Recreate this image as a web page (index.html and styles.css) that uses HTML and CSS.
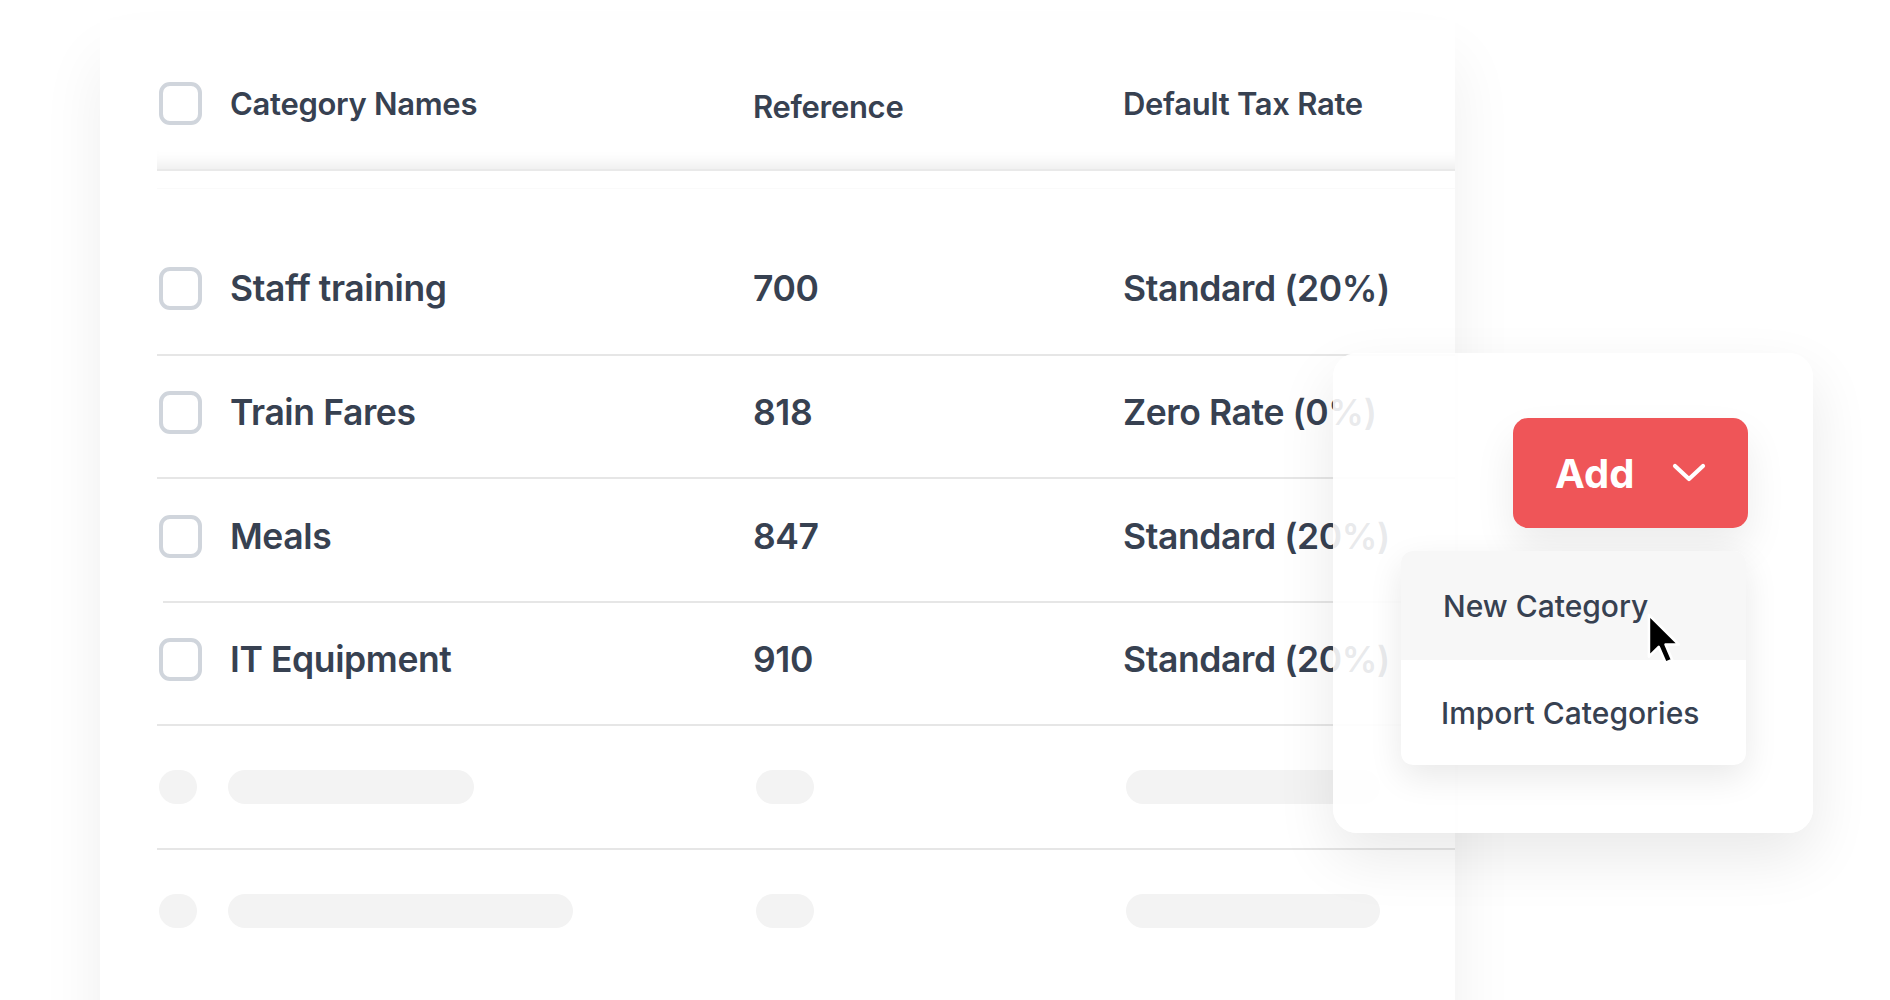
FILE: index.html
```html
<!DOCTYPE html>
<html>
<head>
<meta charset="utf-8">
<link rel="stylesheet" href="styles.css">
</head>
<body>
<div class="page">
  <div class="card">
    <div class="thead grid">
      <div class="cell name"><span class="cb"></span><span>Category Names</span></div>
      <div class="cell ref">Reference</div>
      <div class="cell tax">Default Tax Rate</div>
    </div>
    <div class="spacer"></div>
    <div class="row grid">
      <div class="cell name"><span class="cb"></span><span>Staff training</span></div>
      <div class="cell">700</div>
      <div class="cell">Standard (20%)</div>
    </div>
    <div class="row grid">
      <div class="cell name"><span class="cb"></span><span>Train Fares</span></div>
      <div class="cell">818</div>
      <div class="cell">Zero Rate (0%)</div>
    </div>
    <div class="row grid inset">
      <div class="cell name"><span class="cb"></span><span>Meals</span></div>
      <div class="cell">847</div>
      <div class="cell">Standard (20%)</div>
    </div>
    <div class="row grid">
      <div class="cell name"><span class="cb"></span><span>IT Equipment</span></div>
      <div class="cell">910</div>
      <div class="cell">Standard (20%)</div>
    </div>
    <div class="row grid skel">
      <div class="cell name"><span class="dot"></span><span class="bar bar-a"></span></div>
      <div class="cell"><span class="bar bar-ref"></span></div>
      <div class="cell"><span class="bar bar-tax"></span></div>
    </div>
    <div class="row grid skel last">
      <div class="cell name"><span class="dot"></span><span class="bar bar-b"></span></div>
      <div class="cell"><span class="bar bar-ref"></span></div>
      <div class="cell"><span class="bar bar-tax"></span></div>
    </div>
  </div>

  <div class="panel">
    <button class="add-btn"><span>Add</span>
      <svg class="chev" width="34" height="20" viewBox="0 0 34 20"><path d="M3 3 L17 16 L31 3" fill="none" stroke="#fff" stroke-width="4.2" stroke-linecap="round" stroke-linejoin="round"/></svg>
    </button>
    <div class="menu">
      <div class="item hover">New Category</div>
      <div class="item">Import Categories</div>
    </div>
  </div>

  <svg class="cursor" width="36" height="54" viewBox="0 0 19 28.5"><path d="M1 1 L1 23 L6.2 17.9 L9.8 26.3 L13.3 24.8 L9.8 16.6 L16.8 16.6 Z" fill="#000" stroke="#fff" stroke-width="1.4" stroke-linejoin="round"/></svg>
</div>
</body>
</html>
```
FILE: styles.css
```css
html, body {
  margin: 0;
  padding: 0;
  background: #ffffff;
}
.page {
  position: relative;
  width: 1890px;
  height: 1000px;
  overflow: hidden;
  font-family: Inter, "Noto Sans", "Liberation Sans", sans-serif;
  color: #374151;
}
.card {
  margin-left: 100px;
  margin-top: 20px;
  padding-top: 30px;
  width: 1355px;
  height: 1100px;
  padding-left: 57px;
  box-sizing: border-box;
  background: #ffffff;
  box-shadow: 0 40px 60px rgba(0, 0, 0, 0.065);
}
.grid {
  display: grid;
  grid-template-columns: 596px 370px 1fr;
  align-items: center;
}
.cell {
  display: flex;
  align-items: center;
  white-space: nowrap;
}
.name {
  padding-left: 2px;
  gap: 28px;
}
.cb {
  width: 43px;
  height: 43px;
  box-sizing: border-box;
  border: 4px solid #d0d5dc;
  border-radius: 11px;
  flex: none;
}
.thead {
  padding-top: 32px;
  padding-bottom: 44px;
  font-size: 31px;
  font-weight: 600;
  letter-spacing: -0.3px;
  border-bottom: 2px solid #e9e9e9;
  box-shadow: inset 0 -18px 14px -12px rgba(0, 0, 0, 0.07);
}
.thead .ref {
  padding-top: 6px;
}
.spacer {
  margin-top: 17px;
  height: 43px;
  border-top: 1px solid #fafafa;
}
.row {
  padding-bottom: 8px;
  box-sizing: border-box;
  border-bottom: 2px solid #e6e6e6;
  font-size: 35.5px;
  font-weight: 600;
  letter-spacing: -0.4px;
  height: 123.5px;
}
.row.skel {
  padding-bottom: 0;
}
.row.inset {
  border-bottom: none;
  background: linear-gradient(#e6e6e6, #e6e6e6) no-repeat 6px 100% / calc(100% - 6px) 2px;
}
.row.last {
  border-bottom: none;
}
.dot {
  width: 38px;
  height: 34px;
  border-radius: 17px;
  background: #f3f3f3;
  flex: none;
}
.bar {
  display: block;
  height: 34px;
  border-radius: 17px;
  background: #f3f3f3;
}
.name .bar {
  margin-left: 3px;
}
.bar-a { width: 246px; }
.bar-b { width: 345px; }
.bar-ref { width: 58px; margin-left: 3px; }
.bar-tax { width: 254px; margin-left: 3px; }

.panel {
  position: absolute;
  left: 1333px;
  top: 353px;
  width: 480px;
  height: 480px;
  box-sizing: border-box;
  padding: 65px 65px 0 68px;
  display: flex;
  flex-direction: column;
  border-radius: 24px;
  background: rgba(255, 255, 255, 0.89);
  box-shadow: 0 24px 60px rgba(0, 0, 0, 0.09);
}
.add-btn {
  align-self: flex-end;
  width: 235px;
  height: 110px;
  border: none;
  border-radius: 15px;
  background: #ef5558;
  color: #ffffff;
  font-family: Inter, "Noto Sans", "Liberation Sans", sans-serif;
  font-size: 40px;
  font-weight: 700;
  display: flex;
  align-items: center;
  padding: 0 0 0 42px;
  gap: 38px;
  box-shadow: 0 20px 40px rgba(0, 0, 0, 0.08);
}
.chev {
  display: block;
}
.menu {
  margin-top: 23px;
  width: 345px;
  border-radius: 12px;
  background: #ffffff;
  box-shadow: 0 12px 34px rgba(0, 0, 0, 0.09);
  overflow: hidden;
  font-size: 30px;
  font-weight: 500;
}
.item {
  display: flex;
  align-items: center;
  padding-left: 42px;
}
.item.hover {
  height: 109px;
  background: #f7f7f7;
}
.item + .item {
  height: 105px;
  padding-left: 40px;
}
.cursor {
  position: absolute;
  left: 1647px;
  top: 613px;
}
```
